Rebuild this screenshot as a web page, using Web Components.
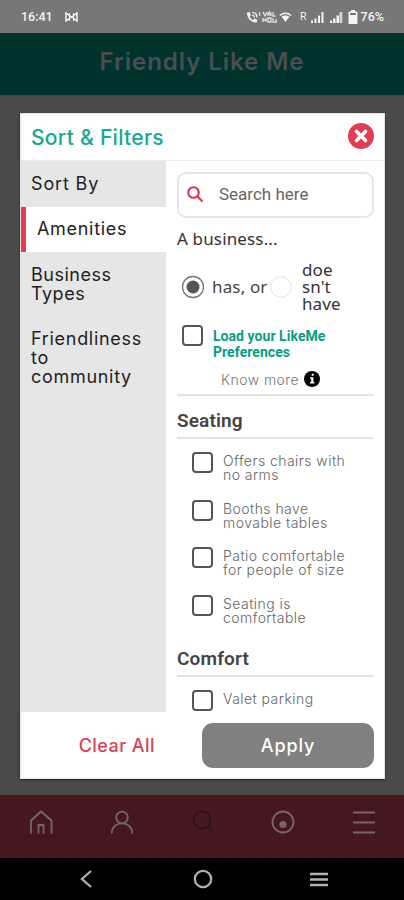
<!DOCTYPE html>
<html lang="en">
<head>
<meta charset="utf-8">
<title>Friendly Like Me</title>
<style>
  body {
    margin: 0;
    height: 900px;
    overflow: hidden;
    background: #4a4a4a;
    font-family: Inter, "Open Sans", sans-serif;
    color: #222;
  }
</style>
</head>
<body>
<friendly-app>
  <status-bar slot="top"></status-bar>
  <app-header slot="top">Friendly Like Me</app-header>

  <filter-dialog>
    <span slot="title">Sort &amp; Filters</span>

    <filter-tab slot="tabs" style="--height: 46px; --spacing: 0.85px">Sort By</filter-tab>
    <filter-tab slot="tabs" selected style="--height: 45px; --spacing: 0.7px">Amenities</filter-tab>
    <filter-tab slot="tabs" style="--height: 64px; --spacing: 0.5px">Business<br>Types</filter-tab>
    <filter-tab slot="tabs" style="--height: 84px; --spacing: 0.7px">Friendliness<br>to<br>community</filter-tab>

    <search-box placeholder="Search here"></search-box>
    <business-choice></business-choice>
    <load-preferences></load-preferences>

    <filter-group heading="Seating">
      <check-item>Offers chairs with<br>no arms</check-item>
      <check-item>Booths have<br>movable tables</check-item>
      <check-item>Patio comfortable<br>for people of size</check-item>
      <check-item>Seating is<br>comfortable</check-item>
    </filter-group>
    <filter-group heading="Comfort">
      <check-item>Valet parking</check-item>
    </filter-group>
  </filter-dialog>

  <tab-bar slot="bottom"></tab-bar>
  <system-nav slot="bottom"></system-nav>
</friendly-app>

<script>
function define(name, html, Base = HTMLElement) {
  const template = document.createElement("template");
  template.innerHTML = html;

  customElements.define(
    name,
    class extends Base {
      constructor() {
        super();
        this.attachShadow({ mode: "open" });
        this.shadowRoot.appendChild(template.content.cloneNode(true));
      }
    }
  );
}

// Copies an attribute of the host into the element marked with [data-text].
class Labelled extends HTMLElement {
  connectedCallback() {
    const label = this.getAttribute("heading") || this.getAttribute("placeholder");
    this.shadowRoot.querySelector("[data-text]").textContent = label;
  }
}

define("friendly-app", `
  <style>
    :host { display: flex; flex-direction: column; height: 900px; }
    main { flex: 1; min-height: 0; padding: 17px 19px 0 20px; }
  </style>
  <slot name="top"></slot>
  <main><slot></slot></main>
  <slot name="bottom"></slot>
`);

define("status-bar", `
  <style>
    :host {
      display: flex;
      align-items: center;
      box-sizing: border-box;
      height: 33px;
      padding: 1px 20px 0 21px;
      background: #777;
      color: #f4f4f4;
      font: 500 12.5px/16px Roboto, sans-serif;
    }
    .time { letter-spacing: 0; width: 44px; }
    .icons { display: flex; align-items: center; margin-left: auto; }
    svg { display: block; fill: currentColor; }
    .roaming { font-size: 10.5px; font-weight: 400; margin: 0 4px 0 8px; }
    .battery { margin: 0 3px 0 5px; }
  </style>
  <span class="time">16:41</span>
  <svg width="13" height="10" viewBox="0 0 13 10">
    <path d="M1 9V1l5.500 4L12 1v8L6.500 5z" fill="none" stroke="currentColor" stroke-width="1.500"/>
    <path d="M4.500 1v8M8.500 1v8" stroke="currentColor"/>
  </svg>
  <div class="icons">
    <svg width="16" height="13" viewBox="0 0 16 13">
      <path d="M1 1.500l2.500-.5 1.500 3-1.500 1.500c.8 1.700 2 2.800 3.500 3.500l1.500-1.500 2.700 1.300-.5 2.700C5.500 12 .7 7 1 1.500z"/>
      <path d="M6 1.500c3 0 5 2 5 5M6 4c1.500 0 2.500 1 2.500 2.500" fill="none" stroke="currentColor" stroke-width="1.200"/>
      <path d="M12.500 2l1-.8h.7V5h-1V2.500z"/>
    </svg>
    <svg width="17" height="12" viewBox="0 0 17 12">
      <path d="M1 1l2 4 2-4M6 5V2.500L7.500 1 9 2.500V5M6 3.500h3M11 1v4h2.500M1 7v4M1 9h3M4 7v4M6 11V7h3v4zM11 7v4h4M14 8v2" fill="none" stroke="currentColor" stroke-width="1.300" opacity=".85"/>
    </svg>
    <svg width="13" height="11" viewBox="0 0 13 11">
      <path d="M.8 3.500Q6.500-1 12.200 3.500M3 5.500q3.500-2.500 7 0" fill="none" stroke="currentColor" stroke-width="1.500"/>
      <path d="M3 5q3.500-2.300 7 0l-3.500 5z"/>
    </svg>
    <span class="roaming">R</span>
    <svg width="13" height="12" viewBox="0 0 13 12">
      <path d="M0 9.500h2V12H0zM3.500 7.500h2V12h-2zM7 4.500h2V12H7zM10.500 1h2v11h-2z"/>
    </svg>
    <svg width="13" height="12" viewBox="0 0 13 12" style="margin-left: 6px">
      <path d="M0 9.500h2V12H0zM3 7.500h2.500V12H3zM6.500 4.500H9V12H6.500z"/>
      <path d="M9.500 1h2.800v11H9.500z" opacity=".75"/>
    </svg>
    <svg class="battery" width="10" height="14" viewBox="0 0 10 14">
      <path d="M3 0h4v1.500h1.500q1 0 1 1V13q0 1-1 1h-7q-1 0-1-1V2.500q0-1 1-1H3z"/>
      <path d="M2 3h6v2H2z" fill="#777"/>
    </svg>
    <span>76%</span>
  </div>
`);

define("app-header", `
  <style>
    :host {
      display: flex;
      justify-content: center;
      box-sizing: border-box;
      height: 63px;
      padding-top: 14px;
      background: #00332d;
      border-bottom: 1px solid #3d4444;
      color: #4b4e50;
      font: 600 24px/30px Inter, sans-serif;
      letter-spacing: 0.95px;
    }
  </style>
  <span><slot></slot></span>
`);

define("filter-dialog", `
  <style>
    :host {
      display: flex;
      flex-direction: column;
      box-sizing: border-box;
      height: 666px;
      background: #fff;
      border: 1px solid #e4e4e4;
      box-shadow: 0 1px 2px #222;
    }
    header {
      display: flex;
      align-items: center;
      justify-content: space-between;
      height: 46px;
      padding: 0 10px;
      border-bottom: 1px solid #eee;
      color: #18a98e;
      font-size: 21px;
      font-weight: 500;
      letter-spacing: 0.3px;
    }
    header svg { margin-bottom: 2px; }
    .content { display: flex; flex: 1; min-height: 0; }
    nav { width: 145px; background: #e6e6e6; }
    .options {
      flex: 1;
      min-width: 0;
      overflow: hidden;
      padding: 11px 10px 0 11px;
    }
    footer {
      display: flex;
      align-items: center;
      justify-content: flex-end;
      gap: 47px;
      height: 66px;
      padding-right: 10px;
    }
    button {
      border: 0;
      padding: 2px 0 0;
      font: 500 18px/22px Inter, sans-serif;
    }
    .clear { background: none; color: #dc4254; letter-spacing: 0.45px; }
    .apply {
      width: 172px;
      height: 45px;
      border-radius: 11px;
      background: #808080;
      color: #fff;
      letter-spacing: 0.9px;
    }
  </style>
  <header>
    <slot name="title"></slot>
    <svg width="26" height="26" viewBox="0 0 26 26">
      <circle cx="13" cy="13" r="13" fill="#e23e51"/>
      <path d="M8.500 8.500l9 9M17.500 8.500l-9 9" stroke="#fff" stroke-width="3.600" stroke-linecap="round"/>
    </svg>
  </header>
  <div class="content">
    <nav><slot name="tabs"></slot></nav>
    <div class="options"><slot></slot></div>
  </div>
  <footer>
    <button class="clear">Clear All</button>
    <button class="apply">Apply</button>
  </footer>
`);

define("filter-tab", `
  <style>
    :host {
      display: flex;
      box-sizing: border-box;
      height: var(--height);
      padding: 13px 0 0 10px;
      font-size: 18px;
      line-height: 19px;
      letter-spacing: var(--spacing);
    }
    :host([selected]) {
      padding: 12px 0 0 11px;
      border-left: 5px solid #e23e51;
      background: #fff;
    }
  </style>
  <span><slot></slot></span>
`);

define("search-box", `
  <style>
    :host {
      display: flex;
      align-items: center;
      gap: 16px;
      box-sizing: border-box;
      height: 46px;
      padding: 0 0 2px 8px;
      border: 2px solid #e6e6e6;
      border-radius: 9px;
      color: #666;
      font: 17px/20px Roboto, sans-serif;
    }
  </style>
  <svg width="16" height="16" viewBox="0 0 16 16" fill="none" stroke="#dc3349" stroke-width="2">
    <circle cx="6.500" cy="6.500" r="5.300"/>
    <path d="M10.500 10.500l5 5"/>
  </svg>
  <span data-text></span>
`, Labelled);

define("business-choice", `
  <style>
    :host {
      display: block;
      color: #444;
      font: 17px/17px "Noto Sans", sans-serif;
    }
    p { margin: 0; padding-top: 12px; letter-spacing: 0.15px; color: #333; }
    .row { display: flex; align-items: center; height: 51px; margin: 14px 0 2px; }
    svg { flex: none; }
    .has { width: 55px; margin-left: 7px; white-space: nowrap; letter-spacing: 0.15px; }
    .not { margin-left: 10px; letter-spacing: 0.1px; color: #333; }
  </style>
  <p>A business...</p>
  <div class="row">
    <svg width="24" height="24" viewBox="0 0 24 24" style="margin-left: 4px">
      <circle cx="12" cy="12" r="10.500" fill="#fff" stroke="#777" stroke-width="1.300"/>
      <circle cx="12" cy="12" r="6.500" fill="#555"/>
    </svg>
    <span class="has">has, or</span>
    <svg width="22" height="22" viewBox="0 0 22 22" style="margin-left: 3px">
      <circle cx="11" cy="11" r="10.300" fill="#fff" stroke="#e3e3e3"/>
    </svg>
    <span class="not">doe<br>sn't<br>have</span>
  </div>
`);

define("check-square", `
  <style>
    :host {
      display: block;
      flex: none;
      box-sizing: border-box;
      width: 21px;
      height: 21px;
      border: 2px solid #555;
      border-radius: 4px;
    }
  </style>
`);

define("load-preferences", `
  <style>
    :host { display: block; height: 80px; border-bottom: 2px solid #e3e3e3; }
    .load { display: flex; gap: 10px; padding: 11px 0 0 5px; }
    .label {
      padding-top: 3px;
      color: #089d84;
      font: 700 14px/16px Roboto, sans-serif;
      letter-spacing: 0.05px;
      white-space: nowrap;
    }
    .more {
      display: flex;
      align-items: center;
      gap: 5px;
      height: 18px;
      margin-top: 10px;
      padding-left: 44px;
      color: #777;
      font-size: 14px;
      font-weight: 300;
      letter-spacing: 0.45px;
    }
  </style>
  <div class="load">
    <check-square></check-square>
    <span class="label">Load your LikeMe<br>Preferences</span>
  </div>
  <div class="more">
    <span>Know more</span>
    <svg width="16" height="16" viewBox="0 0 16 16">
      <circle cx="8" cy="8" r="8" fill="#000"/>
      <path d="M7.700 2.800h2v2h-2zM6.200 6.300h3.200v4.700h1v1.500H6V11h1.200V7.700h-1z" fill="#fff"/>
    </svg>
  </div>
`);

define("filter-group", `
  <style>
    :host { display: block; margin-bottom: -9px; }
    h2 {
      box-sizing: border-box;
      height: 43px;
      margin: 0 0 13px;
      padding-top: 14px;
      border-bottom: 2px solid #e3e3e3;
      color: #444;
      font: 600 19px/22px Roboto, sans-serif;
      letter-spacing: 0.15px;
    }
  </style>
  <h2 data-text></h2>
  <slot></slot>
`, Labelled);

define("check-item", `
  <style>
    :host {
      display: flex;
      gap: 10px;
      height: 47.700px;
      padding-left: 15px;
      color: #666;
      font-size: 14px;
      font-weight: 300;
      line-height: 14px;
      letter-spacing: 0.45px;
    }
    span { padding-top: 2px; white-space: nowrap; }
  </style>
  <check-square></check-square>
  <span><slot></slot></span>
`);

define("tab-bar", `
  <style>
    :host {
      display: flex;
      justify-content: space-between;
      box-sizing: border-box;
      height: 63px;
      padding: 14px 27px 0 28px;
      background: #47171e;
    }
    svg { fill: none; stroke: #78656a; stroke-width: 1.800; }
  </style>
  <svg width="26" height="26" viewBox="0 0 26 26"><path d="M3 24.500V11.500L13 2.500l10.500 9v13M10.500 24.500V16h5v8.500"/></svg>
  <svg width="26" height="26" viewBox="0 0 26 26"><circle cx="13" cy="8.500" r="5.800"/><path d="M2.800 24.500c0-6.500 4.700-10.200 10.200-10.200s10.200 3.700 10.200 10.200"/></svg>
  <svg width="26" height="26" viewBox="0 0 26 26" style="stroke: #2c1015; stroke-width: 1.500"><circle cx="12" cy="11" r="8.500"/><path d="M18 17l5 5"/></svg>
  <svg width="26" height="26" viewBox="0 0 26 26"><circle cx="13" cy="13" r="10.500"/><circle cx="13" cy="15.500" r="3.600" fill="#78656a" stroke="none"/></svg>
  <svg width="26" height="26" viewBox="0 0 26 26"><path d="M2 3.500h22M2 13.500h22M2 23.500h22"/></svg>
`);

define("system-nav", `
  <style>
    :host {
      display: flex;
      align-items: center;
      justify-content: space-between;
      box-sizing: border-box;
      height: 42px;
      padding: 0 76px 0 77px;
      background: #000;
    }
    svg { fill: none; stroke: #b0b0b0; stroke-width: 2.300; }
  </style>
  <svg width="18" height="20" viewBox="0 0 18 20"><path d="M14 2L5 10l9 8"/></svg>
  <svg width="20" height="20" viewBox="0 0 20 20"><circle cx="10" cy="10" r="8.200"/></svg>
  <svg width="18" height="20" viewBox="0 0 18 20"><path d="M0 5h18M0 10.500h18M0 16h18"/></svg>
`);
</script>
</body>
</html>
